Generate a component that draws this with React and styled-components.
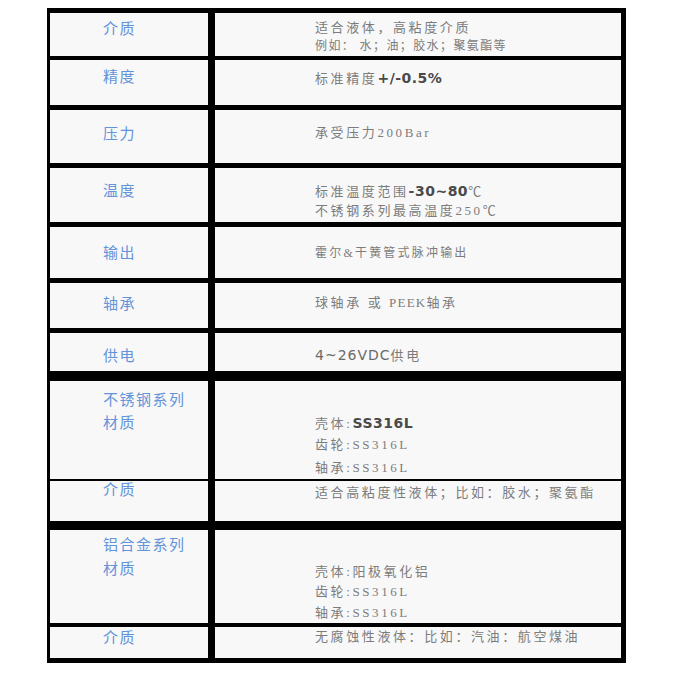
import React from "react";
import styled, { createGlobalStyle } from "styled-components";

const Global = createGlobalStyle`
  html, body { margin: 0; padding: 0; background: #ffffff; }
  body { font-family: "Liberation Serif", "Noto Sans CJK SC", serif; }
`;

const Table = styled.div`
  box-sizing: border-box;
  margin: 8px 0 0 47px;
  width: 579px;
  background: #000;
  padding: 5px 5px 5px 3px;
  display: flex;
  flex-direction: column;
`;

const Row = styled.div`
  display: grid;
  grid-template-columns: 158px 406px;
  column-gap: 7px;
  height: ${(p) => p.$h}px;
  margin-bottom: ${(p) => p.$gap || 0}px;
`;

const Cell = styled.div`
  box-sizing: border-box;
  background: #f8f8f8;
  overflow: visible;
  padding-top: ${(p) => p.$pt || 0}px;
`;

const LabelCell = styled(Cell)`
  padding-left: 53px;
  color: #6393da;
  font-family: "Noto Sans CJK SC", sans-serif;
  font-size: 15px;
  letter-spacing: 1.5px;
  line-height: ${(p) => p.$lh || 20}px;
`;

const ValueCell = styled(Cell)`
  padding-left: 100px;
  color: #7c7c7c;
  font-family: "Liberation Serif", "Noto Sans CJK SC", serif;
  font-size: 13px;
  letter-spacing: 2.6px;
  line-height: ${(p) => p.$lh || 20}px;
  white-space: nowrap;
`;

const Line = styled.div`
  height: ${(p) => p.$lh || 20}px;
  line-height: ${(p) => p.$lh || 20}px;
  font-size: ${(p) => p.$fs || 13}px;
  letter-spacing: ${(p) => (p.$ls != null ? p.$ls : 2.6)}px;
`;

const Sans = styled.span`
  font-family: "DejaVu Sans", "Noto Sans CJK SC", sans-serif;
  font-weight: ${(p) => (p.$bold ? 700 : 400)};
  color: ${(p) => (p.$bold ? "#4a4a4a" : "#6a6a6a")};
  font-size: ${(p) => p.$fs || 13}px;
  letter-spacing: ${(p) => (p.$ls != null ? p.$ls : 1)}px;
`;

const Latin = styled.span`
  letter-spacing: ${(p) => p.$ls}px;
`;

export default function App() {
  return (
    <>
      <Global />
      <Table>
        <Row $h={42} $gap={5}>
          <LabelCell $pt={5}>介质</LabelCell>
          <ValueCell $pt={5}>
            <Line $lh={19}>适合液体，高粘度介质</Line>
            <Line $lh={19} $fs={12} $ls={1.4}>例如： 水；油；胶水；聚氨酯等</Line>
          </ValueCell>
        </Row>
        <Row $h={45} $gap={5}>
          <LabelCell $pt={6}>精度</LabelCell>
          <ValueCell $pt={8}>
            <Line>
              标准精度<Sans $bold $fs={14} $ls={0.5}>+/-0.5%</Sans>
            </Line>
          </ValueCell>
        </Row>
        <Row $h={53} $gap={5}>
          <LabelCell $pt={13}>压力</LabelCell>
          <ValueCell $pt={13}>
            <Line>承受压力200Bar</Line>
          </ValueCell>
        </Row>
        <Row $h={54} $gap={5}>
          <LabelCell $pt={12}>温度</LabelCell>
          <ValueCell $pt={13}>
            <Line>
              标准温度范围<Sans $bold $fs={14} $ls={0.5}>-30~80</Sans>℃
            </Line>
            <Line>不锈钢系列最高温度250℃</Line>
          </ValueCell>
        </Row>
        <Row $h={51} $gap={5}>
          <LabelCell $pt={15}>输出</LabelCell>
          <ValueCell $pt={16}>
            <Line $fs={12} $ls={2.2}>霍尔&amp;干簧管式脉冲输出</Line>
          </ValueCell>
        </Row>
        <Row $h={45} $gap={5}>
          <LabelCell $pt={10}>轴承</LabelCell>
          <ValueCell $pt={10}>
            <Line>
              球轴承 或 <Latin $ls={1.2}>PEEK</Latin>轴承
            </Line>
          </ValueCell>
        </Row>
        <Row $h={38} $gap={10}>
          <LabelCell $pt={12}>供电</LabelCell>
          <ValueCell $pt={12}>
            <Line>
              <Sans $fs={14} $ls={1}>4~26VDC</Sans>供电
            </Line>
          </ValueCell>
        </Row>
        <Row $h={95} $gap={5}>
          <LabelCell $pt={6} $lh={23}>
            <div>不锈钢系列</div>
            <div>材质</div>
          </LabelCell>
          <ValueCell $pt={8}>
            <Line $lh={22.5} />
            <Line $lh={22.5}>
              壳体:<Sans $bold $fs={14} $ls={0.5}>SS316L</Sans>
            </Line>
            <Line $lh={22.5}>齿轮:SS316L</Line>
            <Line $lh={22.5}>轴承:SS316L</Line>
          </ValueCell>
        </Row>
        <Row $h={40} $gap={9}>
          <LabelCell $pt={0} $lh={16}>介质</LabelCell>
          <ValueCell $pt={2}>
            <Line>适合高粘度性液体；比如：胶水；聚氨酯</Line>
          </ValueCell>
        </Row>
        <Row $h={92} $gap={5}>
          <LabelCell $pt={2} $lh={24}>
            <div>铝合金系列</div>
            <div>材质</div>
          </LabelCell>
          <ValueCell $pt={11}>
            <Line $lh={20.5} />
            <Line $lh={20.5}>壳体:阳极氧化铝</Line>
            <Line $lh={20.5}>齿轮:SS316L</Line>
            <Line $lh={20.5}>轴承:SS316L</Line>
          </ValueCell>
        </Row>
        <Row $h={31}>
          <LabelCell $pt={0}>介质</LabelCell>
          <ValueCell $pt={0}>
            <Line>无腐蚀性液体：比如：汽油：航空煤油</Line>
          </ValueCell>
        </Row>
      </Table>
    </>
  );
}
